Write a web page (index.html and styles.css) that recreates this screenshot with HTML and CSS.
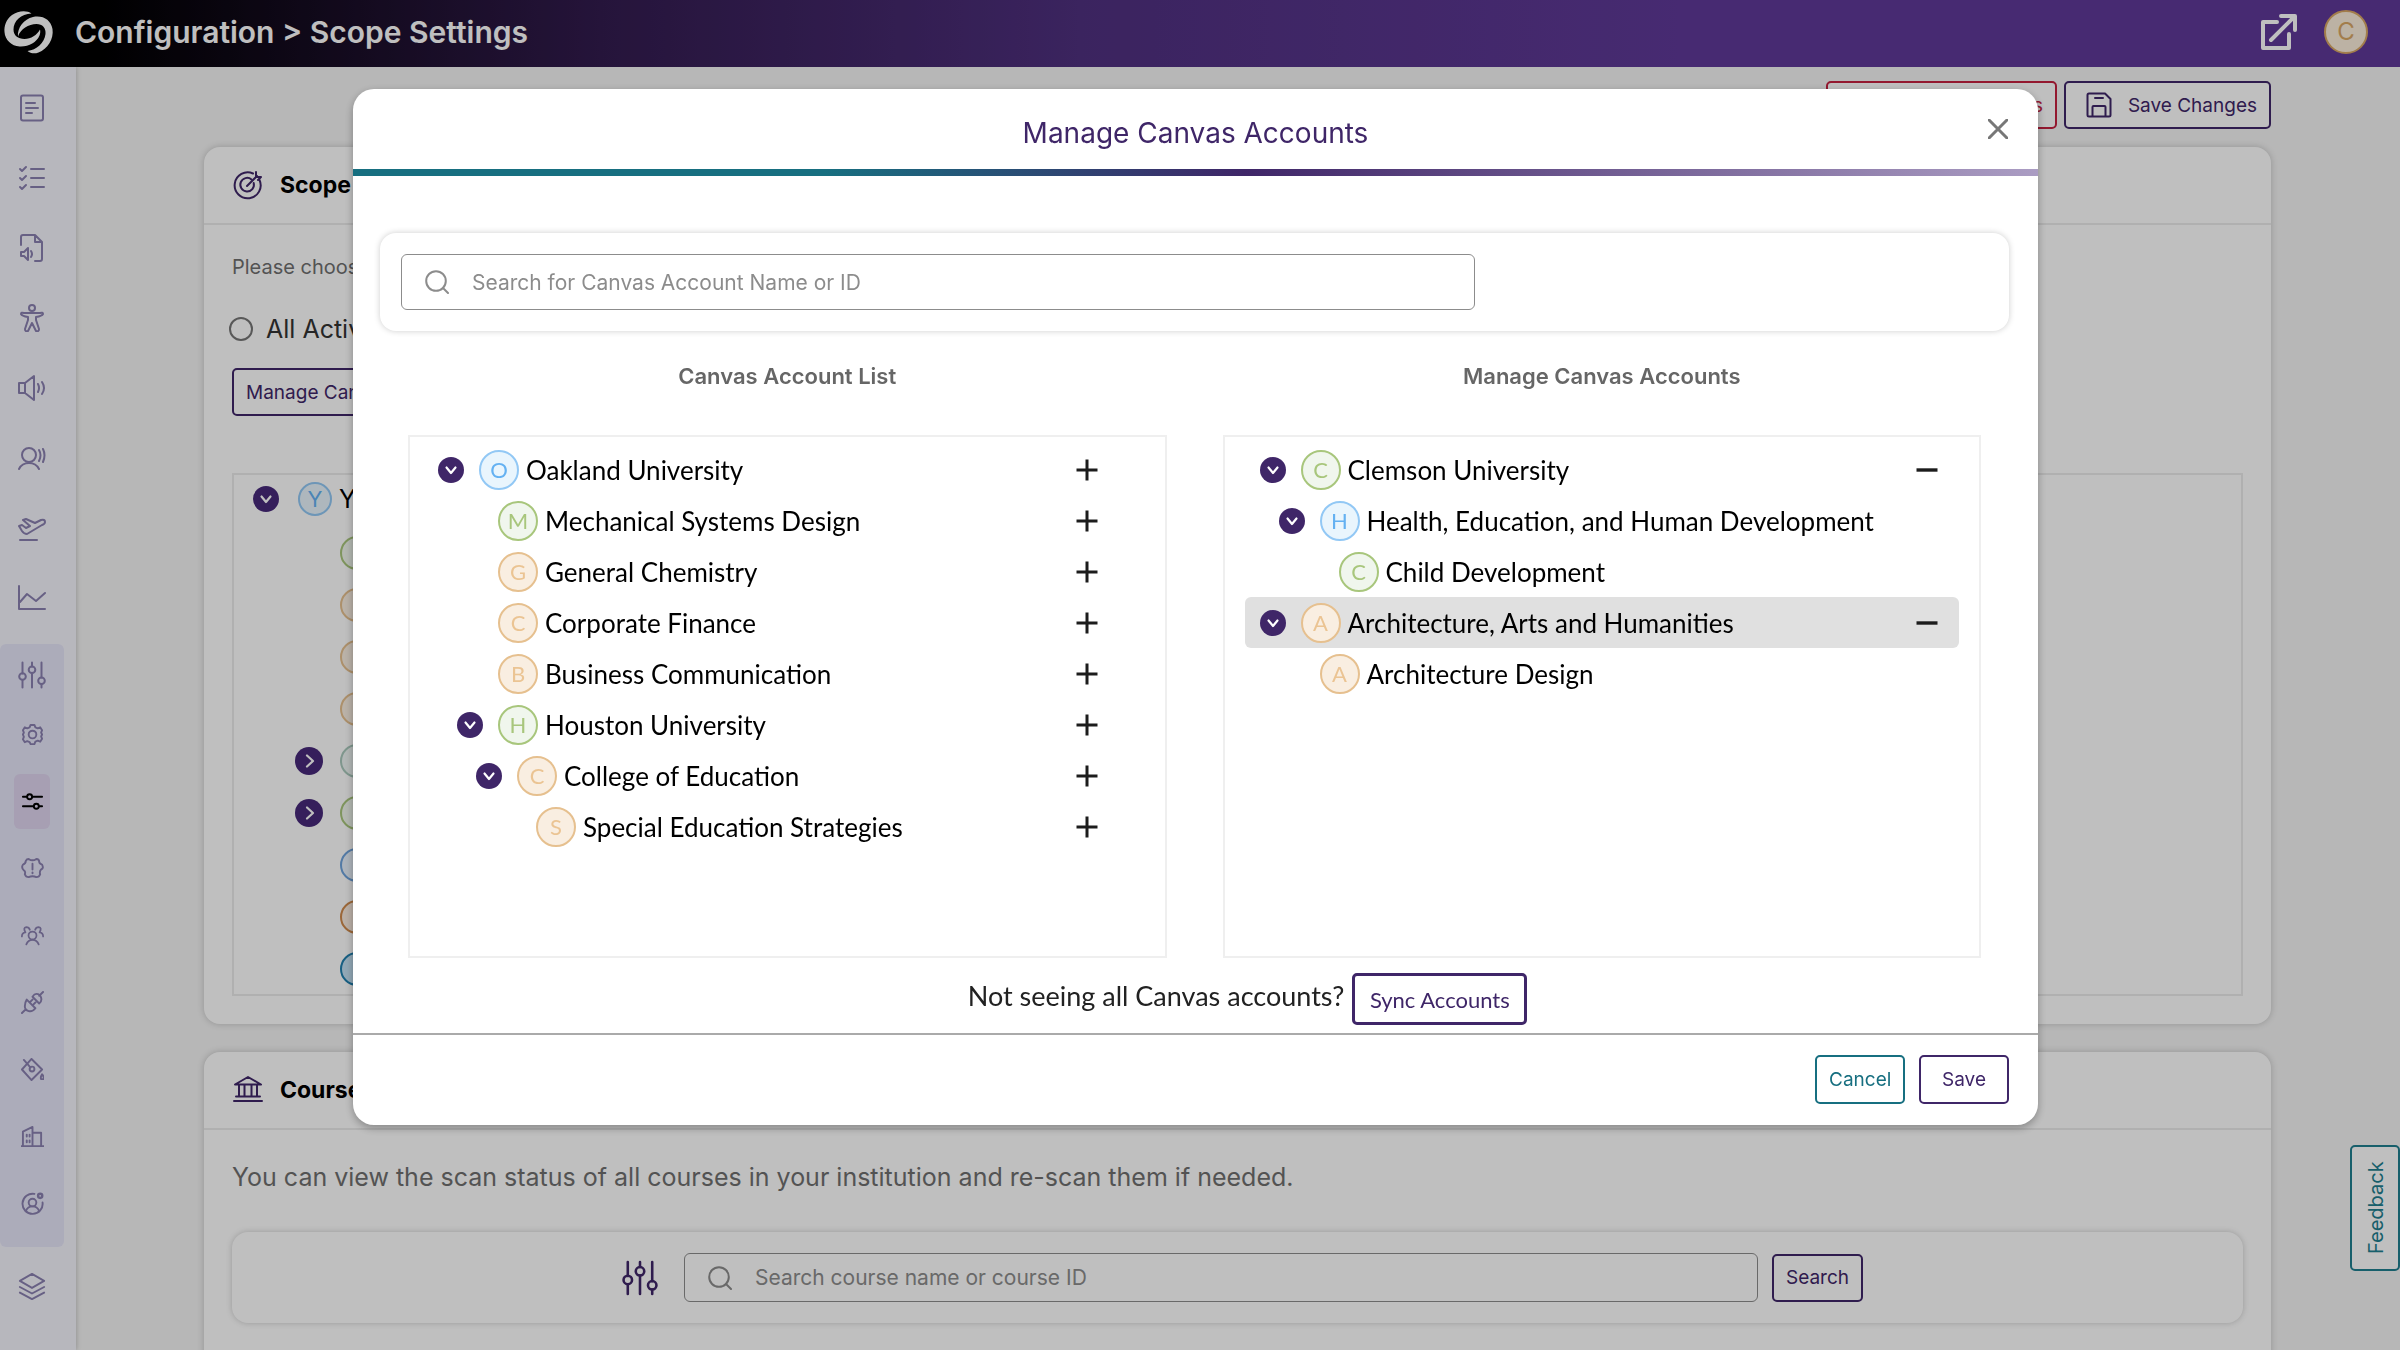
FILE: index.html
```html
<!DOCTYPE html>
<html lang="en">
<head>
    <meta charset="UTF-8">
    <meta name="viewport" content="width=device-width, initial-scale=1.0">
    <title>Configuration - Scope Settings</title>
    <link rel="stylesheet" href="styles.css">
</head>
<body>
    <!-- shared icons -->
    <svg class="sprite" aria-hidden="true">
        <symbol id="down" viewBox="0 0 26 26"><circle cx="13" cy="13" r="13" fill="currentColor"/><path d="M8.500 10.500l4.500 5.500 4.500-5.500" fill="none" stroke="#fff" stroke-width="2.200" stroke-linecap="round" stroke-linejoin="round"/></symbol>
        <symbol id="right" viewBox="0 0 28 28"><circle cx="14" cy="14" r="14" fill="currentColor"/><path d="M12 8.500l6 5.500-6 5.500" fill="none" stroke="#fff" stroke-width="2.200" stroke-linecap="round" stroke-linejoin="round"/></symbol>
        <symbol id="plus" viewBox="0 0 22 22"><path d="M11 0.500v21M0.500 11h21" stroke="currentColor" stroke-width="3"/></symbol>
        <symbol id="minus" viewBox="0 0 22 22"><path d="M0.500 11h21" stroke="currentColor" stroke-width="3.400"/></symbol>
        <symbol id="search" viewBox="0 0 24 24"><circle cx="11" cy="11" r="9.800"/><path d="M18 18l5 5"/></symbol>
        <symbol id="sliders" viewBox="0 0 28 28"><path d="M4.500 1.500v11M4.500 19v7.500M14 1.500v4M14 12v14.500M23.500 1.500v15M23.500 23v3.500"/><circle cx="4.500" cy="15.500" r="3.300"/><circle cx="14" cy="8.800" r="3.300"/><circle cx="23.500" cy="19.700" r="3.300"/></symbol>
    </svg>

    <header class="topbar">
        <svg class="logo" viewBox="0 0 50 44">
            <path d="M27.500 3.500C23 0 14 0.500 8 5 2 9.500 0 16 0.500 22c0.500 8 7 14 15 14.500 9 0.500 17-4 20-11 0.800-2 1-4 0.500-6-3 5.500-9 9.500-15.500 9.500-6.500 0-11-3.500-11-9.500C9.500 11 17 4 27.500 3.500z"/>
            <path d="M14 26.500C13 18 20 9 29 7c10-2 18 3 19.500 12 1.500 10-5 20-14 23.500-4 1.500-8 1-11-1.500 9-1 17-8 18-17 0.700-6-3-10-9-10-8 0-16 5-18.500 12.500z"/>
        </svg>
        <h1>Configuration &gt; Scope Settings</h1>
        <a class="open-link" href="#" aria-label="Open in new window">
            <svg viewBox="0 0 36 36"><path d="M16 8H2v26h26V20M20 2h14v14M33 3L10 26"/></svg>
        </a>
        <span class="avatar user">C</span>
    </header>

    <div class="layout">
        <nav class="sidebar">
            <ul class="menu">
                <li><a href="#" aria-label="Content"><svg viewBox="0 0 28 28"><rect x="3" y="1.500" width="22" height="25" rx="2"/><path d="M8 9h9M8 14h12M8 19h6"/></svg></a></li>
                <li><a href="#" aria-label="Checklist"><svg viewBox="0 0 28 28"><path d="M2 5l2 2 4-4M2 14l2 2 4-4M2 23l2 2 4-4M13 5h13M13 14h13M13 23h13"/></svg></a></li>
                <li><a href="#" aria-label="Audio files"><svg viewBox="0 0 28 28"><path d="M3 11V3q0-2 2-2h12l7 7v17q0 2-2 2h-5M17 1v7h7M3 18h3l4-4v12l-4-4H3zM13 17q2 3 0 6"/></svg></a></li>
                <li><a href="#" aria-label="Accessibility"><svg viewBox="0 0 28 28"><circle cx="14" cy="4" r="3"/><path d="M3 10q0-2 3-1h16q3-1 3 1-1 2-7 3v3l3 9q0 3-3 2l-4-8-4 8q-3 1-3-2l3-9v-3q-6-1-7-3z"/></svg></a></li>
                <li><a href="#" aria-label="Sound"><svg viewBox="0 0 28 28"><path d="M1 9h6l9-7v24l-9-7H1zM7 9v10M20 10q2 4 0 8M24 8q4 6 0 12"/></svg></a></li>
                <li><a href="#" aria-label="Voice"><svg viewBox="0 0 28 28"><circle cx="11" cy="11" r="7"/><path d="M1 25q3-6 10-6t10 6M21 6q3 5 0 11M25 5q3 6 0 13"/></svg></a></li>
                <li><a href="#" aria-label="Departures"><svg viewBox="0 0 28 28"><path d="M1 12l3-1 4 3 4-2-7-6 3-1 9 4 6-3q4-1 4 2 0 2-3 3L9 20q-3 0-5-3zM2 26h17"/></svg></a></li>
                <li><a href="#" aria-label="Reports"><svg viewBox="0 0 28 28"><path d="M1 2v23h26M2 18l7-8 9 7 9-8"/></svg></a></li>
            </ul>
            <ul class="submenu">
                <li class="lead"><a href="#" aria-label="Configuration"><svg viewBox="0 0 28 28"><use href="#sliders"/></svg></a></li>
                <li><a href="#" aria-label="General"><svg viewBox="0 0 24 24"><path d="M10 2h4l1 2.500 2.500 1 2.500-1 2 3-1 2.500 1 2-1 2 1 2.500-2 3-2.500-1-2.500 1-1 2.500h-4L9 20l-2.500-1-2.500 1-2-3 1-2.500-1-2.500 1-2-1-2.500 2-3 2.500 1 2.500-1z"/><circle cx="12" cy="12" r="4"/></svg></a></li>
                <li><a class="active" href="#" aria-label="Scope settings"><svg viewBox="0 0 24 24"><path d="M2 7h4M12 7h10M2 17h11M19 17h3"/><circle cx="9" cy="7" r="2.600"/><circle cx="16" cy="17" r="2.600"/></svg></a></li>
                <li><a href="#" aria-label="Alerts"><svg viewBox="0 0 24 24"><path d="M8 2q4 3 8 0 3 0 3 3 0 2 3 3 2 4-1 5-2 2-1 5-1 3-4 3-4-2-8 0-3 0-4-3 1-3-1-4-3-3-1-6 3-1 3-4 1-2 3-2zM12 7v6M12 16v1"/></svg></a></li>
                <li><a href="#" aria-label="Roles"><svg viewBox="0 0 26 24"><circle cx="13" cy="12" r="4.500"/><path d="M6 22q2-5 7-5t7 5M1 13q0-4 4-4.500Q2 3 6 2.500q3 0 4 3M25 13q0-4-4-4.500 3-5.500-1-6-3 0-4 3"/></svg></a></li>
                <li><a href="#" aria-label="Integrations"><svg viewBox="0 0 24 24"><path d="M1 23l4-4M23 1l-4 4M6 9l9 9q-3 4-7 3t-4-5q0-4 2-7zM12 6l7 7q3-2 2-6t-5-4q-2 0-4 3zM9 12l3-3M12 15l3-3"/></svg></a></li>
                <li><a href="#" aria-label="Branding"><svg viewBox="0 0 24 24"><path d="M11 1l11 11-11 11L1 12zM3 2l7 8"/><circle cx="11.500" cy="11.500" r="2.500"/><path d="M22 17q-2 3-1 5h2.500q1-2-1.500-5z"/></svg></a></li>
                <li><a href="#" aria-label="Institution"><svg viewBox="0 0 24 24"><path d="M0 22h24M2 22V7l10-5v20M12 8h9v14M6 10v2M9 10v2M6 16v2M9 16v2"/></svg></a></li>
                <li><a href="#" aria-label="User settings"><svg viewBox="0 0 24 24"><path d="M14 2A10.500 10.500 0 1 0 22.500 11"/><circle cx="12" cy="11" r="4"/><path d="M5 20q2-5 7-5t7 5"/><circle cx="20" cy="4" r="2.200" stroke-width="2.500"/></svg></a></li>
            </ul>
            <a class="layers" href="#" aria-label="Layers"><svg viewBox="0 0 28 30"><path d="M14 1l13 7.500L14 16 1 8.500zM1 15l13 7 13-7M1 21l13 7 13-7"/></svg></a>
        </nav>

        <main class="content">
            <div class="actions">
                <button class="btn danger" type="button">Discard Changes</button>
                <button class="btn with-icon" type="button">
                    <svg viewBox="0 0 26 26"><path d="M1.500 3q0-1.500 1.500-1.500h16L24.500 7v16q0 1.500-1.500 1.500H3q-1.500 0-1.500-1.500zM6.500 24V15q0-1 1-1h11q1 0 1 1v9M9 6h8"/></svg>
                    Save Changes
                </button>
            </div>

            <section class="card">
                <div class="card-head">
                    <svg viewBox="0 0 30 30"><path d="M20 3.500A13 13 0 1 0 26.500 10"/><path d="M18.500 9.500A6.800 6.800 0 1 0 20.700 13"/><path d="M14 16L24 6M23 2v5h5l-3 3"/></svg>
                    <h2>Scope</h2>
                </div>
                <div class="card-body">
                    <p class="hint">Please choose</p>
                    <label class="choice"><input type="radio" name="scope"> All Active</label>
                    <button class="btn" type="button">Manage Canvas Accounts</button>
                    <ul class="scope-tree">
                        <li class="root"><svg class="chev"><use href="#down"/></svg><span class="avatar blue">Y</span>Y</li>
                        <li><span class="avatar green"></span></li>
                        <li><span class="avatar orange"></span></li>
                        <li><span class="avatar orange"></span></li>
                        <li><span class="avatar orange"></span></li>
                        <li><svg class="chev"><use href="#right"/></svg><span class="avatar teal"></span></li>
                        <li><svg class="chev"><use href="#right"/></svg><span class="avatar green"></span></li>
                        <li><span class="avatar navy"></span></li>
                        <li><span class="avatar rust"></span></li>
                        <li><span class="avatar deep"></span></li>
                    </ul>
                </div>
            </section>

            <section class="card">
                <div class="card-head">
                    <svg viewBox="0 0 30 30"><path d="M2 9.500L15 2l13 7.500zM6 10v11M11.500 10v11M18.500 10v11M24 10v11M3 21.500h24M1 26h28"/></svg>
                    <h2>Course</h2>
                </div>
                <div class="card-body">
                    <p class="lead-text">You can view the scan status of all courses in your institution and re-scan them if needed.</p>
                    <div class="search-card course-search">
                        <svg class="filter" viewBox="0 0 28 28"><use href="#sliders"/></svg>
                        <div class="search-box">
                            <svg viewBox="0 0 24 24"><use href="#search"/></svg>
                            <input type="text" placeholder="Search course name or course ID" aria-label="Search course name or course ID">
                        </div>
                        <button class="btn" type="button">Search</button>
                    </div>
                </div>
            </section>
        </main>
    </div>

    <button class="btn feedback" type="button">Feedback</button>

    <div class="overlay">
        <div class="modal" role="dialog" aria-modal="true" aria-labelledby="modal-title">
            <div class="modal-head">
                <h2 id="modal-title">Manage Canvas Accounts</h2>
                <button class="close" type="button" aria-label="Close"><svg viewBox="0 0 20 20"><path d="M1 1l18 18M19 1L1 19"/></svg></button>
            </div>
            <div class="modal-body">
                <div class="search-card">
                    <div class="search-box">
                        <svg viewBox="0 0 24 24"><use href="#search"/></svg>
                        <input type="text" placeholder="Search for Canvas Account Name or ID" aria-label="Search for Canvas Account Name or ID">
                    </div>
                </div>

                <div class="columns">
                    <section>
                        <h3>Canvas Account List</h3>
                        <ul class="tree source">
                            <li><svg class="chev"><use href="#down"/></svg><span class="avatar blue">O</span>Oakland University<button type="button" aria-label="Add"><svg><use href="#plus"/></svg></button></li>
                            <li class="l1"><span class="chev"></span><span class="avatar green">M</span>Mechanical Systems Design<button type="button" aria-label="Add"><svg><use href="#plus"/></svg></button></li>
                            <li class="l1"><span class="chev"></span><span class="avatar orange">G</span>General Chemistry<button type="button" aria-label="Add"><svg><use href="#plus"/></svg></button></li>
                            <li class="l1"><span class="chev"></span><span class="avatar orange">C</span>Corporate Finance<button type="button" aria-label="Add"><svg><use href="#plus"/></svg></button></li>
                            <li class="l1"><span class="chev"></span><span class="avatar orange">B</span>Business Communication<button type="button" aria-label="Add"><svg><use href="#plus"/></svg></button></li>
                            <li class="l1"><svg class="chev"><use href="#down"/></svg><span class="avatar green">H</span>Houston University<button type="button" aria-label="Add"><svg><use href="#plus"/></svg></button></li>
                            <li class="l2"><svg class="chev"><use href="#down"/></svg><span class="avatar orange">C</span>College of Education<button type="button" aria-label="Add"><svg><use href="#plus"/></svg></button></li>
                            <li class="l3"><span class="chev"></span><span class="avatar orange">S</span>Special Education Strategies<button type="button" aria-label="Add"><svg><use href="#plus"/></svg></button></li>
                        </ul>
                    </section>
                    <section>
                        <h3>Manage Canvas Accounts</h3>
                        <ul class="tree">
                            <li><svg class="chev"><use href="#down"/></svg><span class="avatar green">C</span>Clemson University<button type="button" aria-label="Remove"><svg><use href="#minus"/></svg></button></li>
                            <li class="l1"><svg class="chev"><use href="#down"/></svg><span class="avatar blue">H</span>Health, Education, and Human Development</li>
                            <li class="l2"><span class="chev"></span><span class="avatar green">C</span>Child Development</li>
                            <li class="selected"><svg class="chev"><use href="#down"/></svg><span class="avatar orange">A</span>Architecture, Arts and Humanities<button type="button" aria-label="Remove"><svg><use href="#minus"/></svg></button></li>
                            <li class="l1"><span class="chev"></span><span class="avatar orange">A</span>Architecture Design</li>
                        </ul>
                    </section>
                </div>

                <div class="sync">
                    <span>Not seeing all Canvas accounts?</span>
                    <button class="btn" type="button">Sync Accounts</button>
                </div>
            </div>
            <div class="modal-foot">
                <button class="btn teal-btn" type="button">Cancel</button>
                <button class="btn" type="button">Save</button>
            </div>
        </div>
    </div>
</body>
</html>
```
FILE: styles.css
```css
* {
    margin: 0;
    padding: 0;
    box-sizing: border-box;
}

body {
    background: #f4f4f4;
    font-family: Inter, "Liberation Sans", sans-serif;
    color: #000;
    height: 100vh;
    overflow: hidden;
}

ul {
    list-style: none;
}

button,
input {
    font-family: inherit;
}

svg {
    fill: none;
    stroke-linecap: round;
    stroke-linejoin: round;
    flex-shrink: 0;
}

.sprite {
    display: none;
}

/* Top bar */
.topbar {
    height: 67px;
    padding: 0 32px 4px 4px;
    display: flex;
    align-items: center;
    background: linear-gradient(90deg, #000 4%, #321b4e 25%, #4f307f 45%, #5f3998 70%);
    color: #fff;
}

.logo {
    width: 50px;
    height: 44px;
    margin-right: 21px;
    fill: #fff;
}

.topbar h1 {
    font-size: 30px;
    font-weight: 600;
}

.open-link {
    margin-left: auto;
    margin-right: 27px;
    height: 36px;
}

.open-link svg {
    width: 36px;
    height: 36px;
    stroke: #fff;
    stroke-width: 4;
}

.avatar {
    width: 40px;
    height: 40px;
    border-radius: 50%;
    border: 2px solid;
    display: flex;
    align-items: center;
    justify-content: center;
    flex-shrink: 0;
    font-size: 22px;
}

.user {
    width: 44px;
    height: 44px;
    background: #fbeedb;
    border-color: #d9a765;
    color: #d9a765;
    font-size: 24px;
}

.blue { color: #64b1f2; border-color: #92c8f5; background: #e9f5fd; }
.green { color: #a8c67c; border-color: #a8c67c; background: #f0f6ed; }
.orange { color: #ebc493; border-color: #e6c08f; background: #f9eee1; }
.teal { border-color: #a9c9bc; background: #eef5f3; }
.navy { border-color: #6fa3dc; background: #e8f1fb; }
.rust { border-color: #cf8a4c; background: #f9ebdf; }
.deep { border-color: #1f7fae; background: #c3e1f3; }

.layout {
    display: flex;
    height: calc(100vh - 67px);
}

/* Sidebar */
.sidebar {
    width: 76px;
    flex-shrink: 0;
    padding-top: 6px;
    background: #f5f4fd;
    box-shadow: 0 0 5px rgba(0, 0, 0, 0.25);
}

.sidebar a {
    display: flex;
    align-items: center;
    justify-content: center;
}

.sidebar svg {
    width: 28px;
    height: 28px;
    stroke: #8a80b0;
    stroke-width: 2;
}

.menu {
    width: 64px;
    margin-bottom: 11px;
}

.menu a {
    height: 70px;
}

.submenu {
    width: 64px;
    padding-bottom: 10px;
    border-radius: 6px;
    background: #e6e6f9;
}

.submenu a {
    width: 36px;
    height: 55px;
    margin: 0 auto;
}

.submenu li {
    height: 67px;
    padding-top: 6px;
}

.submenu .lead {
    height: 57px;
    padding-top: 3px;
}

.submenu li:not(.lead) svg {
    width: 23px;
    height: 23px;
}

.submenu a.active {
    background: #dfd4ef;
    border-radius: 6px;
}

.submenu .active svg {
    stroke: #000;
}

.layers {
    width: 64px;
    height: 80px;
}

/* Page content */
.content {
    flex: 1;
    padding: 14px 129px 0 128px;
    overflow: hidden;
}

.actions {
    display: flex;
    justify-content: flex-end;
    gap: 7px;
    margin-bottom: 18px;
}

.btn {
    height: 48px;
    padding: 0 12px;
    border: 2px solid #3f2668;
    border-radius: 5px;
    background: #fff;
    color: #3f2668;
    font-size: 19px;
    cursor: pointer;
}

.btn.danger {
    width: 231px;
    border-color: #c4203f;
    color: #c4203f;
    text-align: right;
}

.with-icon {
    display: flex;
    align-items: center;
    gap: 16px;
    padding-left: 20px;
}

.with-icon svg {
    width: 26px;
    height: 26px;
    stroke: currentColor;
    stroke-width: 2;
}

.card {
    background: #fff;
    border-radius: 16px;
    box-shadow: 0 0 7px rgba(0, 0, 0, 0.2);
    margin-bottom: 28px;
}

.card-head {
    height: 78px;
    padding-left: 29px;
    display: flex;
    align-items: center;
    gap: 17px;
    border-bottom: 2px solid #ebebeb;
}

.card-head svg {
    width: 30px;
    height: 30px;
    stroke: #3f2668;
    stroke-width: 2;
}

.card-head h2 {
    font-size: 23px;
    font-weight: 700;
}

.card-body {
    padding: 28px;
}

.card:last-child {
    height: 400px;
}

.hint {
    font-size: 20px;
    line-height: 28px;
    color: #6f6f6f;
    margin-bottom: 34px;
}

.choice {
    display: flex;
    align-items: center;
    gap: 13px;
    height: 28px;
    margin: 0 0 25px -3px;
    font-size: 25px;
    color: #333;
}

.choice input {
    appearance: none;
    width: 24px;
    height: 24px;
    border: 2px solid #767676;
    border-radius: 50%;
}

.scope-tree {
    height: 523px;
    margin-top: 57px;
    border: 2px solid #ebebeb;
}

.scope-tree li {
    height: 52px;
    padding-left: 61px;
    display: flex;
    align-items: center;
    font-size: 25px;
}

.scope-tree .chev {
    width: 28px;
    height: 28px;
    color: #47297a;
}

.scope-tree .avatar {
    width: 34px;
    height: 34px;
    margin-left: 45px;
}

.scope-tree .chev + .avatar {
    margin-left: 17px;
}

.scope-tree .root {
    padding: 0 0 4px 19px;
}

.scope-tree .root .chev {
    width: 26px;
    height: 26px;
}

.scope-tree .root .avatar {
    margin-left: 19px;
    margin-right: 7px;
}

.lead-text {
    font-size: 25px;
    line-height: 38px;
    color: #6f6f6f;
    margin-bottom: 36px;
}

.search-card {
    padding: 21px;
    border-radius: 16px;
    background: #fff;
    box-shadow: 0 0 6px rgba(0, 0, 0, 0.2);
    display: flex;
    align-items: center;
}

.search-box {
    width: 100%;
    max-width: 1074px;
    height: 56px;
    display: flex;
    align-items: center;
    gap: 23px;
    padding-left: 23px;
    border: 1px solid #8c8c8c;
    border-radius: 6px;
}

.search-box svg {
    width: 24px;
    height: 24px;
    stroke: #8c8c8c;
    stroke-width: 2;
}

.search-box input {
    flex: 1;
    height: 100%;
    border: none;
    outline: none;
    background: none;
    font-size: 21px;
}

.search-box input::placeholder {
    color: #8c8c8c;
    opacity: 1;
}

.course-search {
    justify-content: center;
    gap: 14px;
    padding-left: 31px;
}

.course-search .search-box {
    height: 49px;
}

.course-search .filter {
    width: 36px;
    height: 36px;
    margin-right: 12px;
    stroke: #3f2668;
    stroke-width: 2;
}

.feedback {
    position: absolute;
    right: 0;
    top: 1145px;
    width: 50px;
    height: 126px;
    writing-mode: vertical-rl;
    transform: rotate(180deg);
    border-color: #1f7f8f;
    color: #1f7f8f;
    font-size: 20px;
}

/* Modal */
.overlay {
    position: fixed;
    inset: 0;
    padding: 89px 362px 0 353px;
    background: rgba(0, 0, 0, 0.25);
}

.modal {
    background: #fff;
    border-radius: 21px;
    box-shadow: 0 3px 9px rgba(0, 0, 0, 0.3);
}

.modal-head {
    position: relative;
    height: 87px;
    display: flex;
    align-items: center;
    justify-content: center;
    border-bottom: 7px solid;
    border-image: linear-gradient(90deg, #176f80 28%, #3f2668 53%, #ab9dc3) 1;
}

.modal-head h2 {
    font-size: 28px;
    line-height: 34px;
    padding-top: 8px;
    font-weight: 400;
    color: #3f2668;
}

.close {
    position: absolute;
    right: 30px;
    top: 30px;
    width: 20px;
    height: 20px;
    border: none;
    background: none;
    cursor: pointer;
}

.close svg {
    width: 20px;
    height: 20px;
    stroke: #777;
    stroke-width: 3;
}

.modal-body {
    padding: 57px 29px 8px 27px;
}

.columns {
    display: grid;
    grid-template-columns: 1fr 1fr;
    gap: 56px;
    padding: 0 28px;
    margin-top: 31px;
}

.columns section {
    display: flex;
    flex-direction: column;
}

.columns h3 {
    font-size: 22px;
    line-height: 28px;
    font-weight: 600;
    color: #666;
    text-align: center;
    margin-bottom: 45px;
}

.tree {
    flex: 1;
    min-height: 523px;
    padding: 7px 20px;
    border: 2px solid #efefef;
    font-family: Lato, sans-serif;
    font-size: 26px;
}

.tree.source {
    padding: 7px 46px 7px 13px;
}

.tree li {
    height: 51px;
    padding: 0 21px 0 15px;
    display: flex;
    align-items: center;
    border-radius: 6px;
}

.tree li.l1 { padding-left: 34px; }
.tree li.l2 { padding-left: 53px; }
.tree li.l3 { padding-left: 72px; }

.tree li.selected {
    background: #e0e0e0;
}

.tree .chev {
    width: 26px;
    height: 26px;
    flex-shrink: 0;
    color: #3f2668;
}

.tree .avatar {
    margin: 0 7px 0 15px;
}

.tree button {
    width: 22px;
    height: 22px;
    margin-left: auto;
    border: none;
    background: none;
    color: #1c1c1c;
    cursor: pointer;
}

.tree button svg {
    width: 22px;
    height: 22px;
    display: block;
    stroke-linecap: butt;
}

.sync {
    margin-top: 15px;
    padding-left: 106px;
    display: flex;
    align-items: center;
    justify-content: center;
    gap: 8px;
    font-family: Lato, sans-serif;
    font-size: 27px;
    line-height: 32px;
    color: #222;
}

.sync span {
    padding-bottom: 6px;
}

.sync .btn {
    width: 175px;
    height: 52px;
    border-width: 3px;
    font-size: 22px;
}

.modal-foot {
    height: 92px;
    padding: 0 29px 2px;
    display: flex;
    align-items: center;
    justify-content: flex-end;
    gap: 14px;
    border-top: 2px solid #aaa;
}

.modal-foot .btn {
    width: 90px;
    height: 49px;
}

.btn.teal-btn {
    border-color: #176f80;
    color: #176f80;
}
```
